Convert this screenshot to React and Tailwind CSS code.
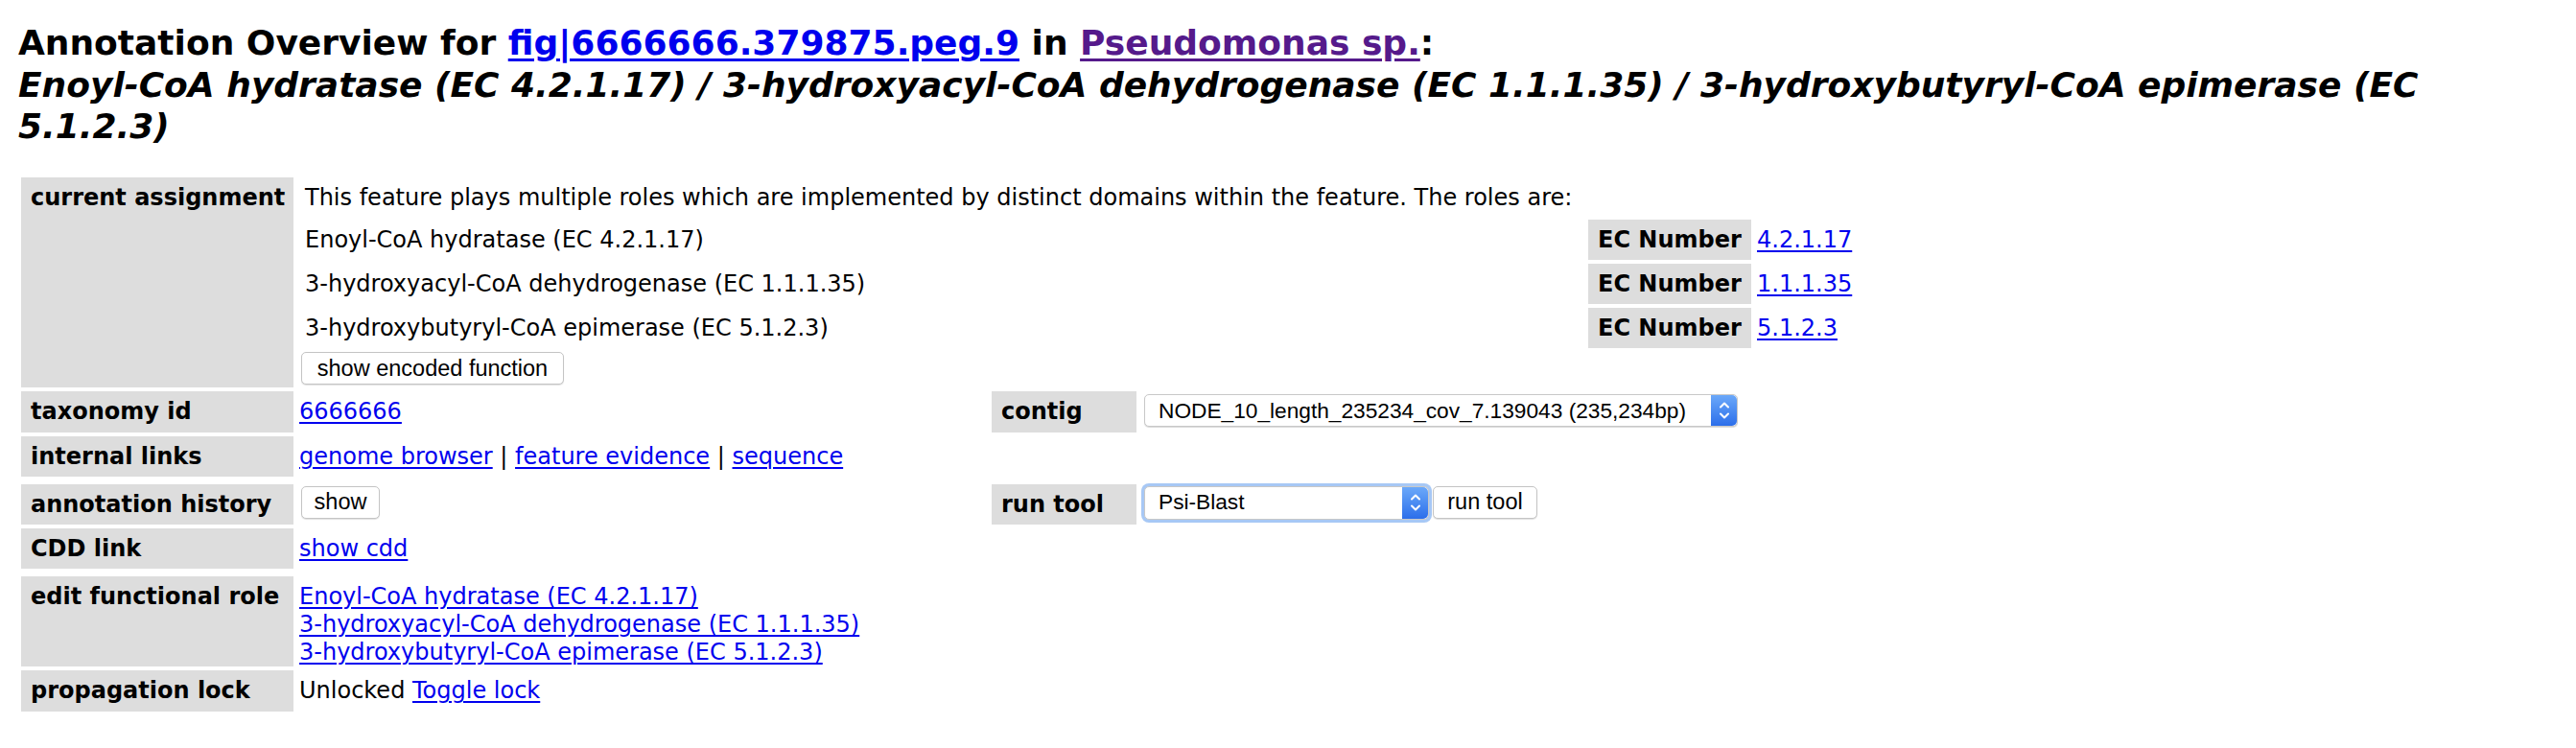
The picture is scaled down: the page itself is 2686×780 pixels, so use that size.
import React from "react";

const link = "text-[#0000ee] underline decoration-2 underline-offset-[3px]";
const rowGrid = "grid grid-cols-[284px_720px_151px_auto] gap-x-1";

function Label({ children }) {
    return (
        <div className="bg-[#dddddd] pl-[10px] pt-[7px] pb-[6px] font-bold whitespace-nowrap">
            {children}
        </div>
    );
}

function Button({ children, width }) {
    return (
        <div
            className={
                "h-[34px] flex items-center justify-center bg-white border border-[#c4c4c4] rounded-[5px] shadow-[0_1px_1px_rgba(0,0,0,0.12)] " +
                "font-['Liberation_Sans',Arial,sans-serif] text-[23.5px] text-black whitespace-nowrap " +
                width
            }
        >
            {children}
        </div>
    );
}

function Stepper() {
    return (
        <div className="h-full w-[27px] rounded-r-[5px] bg-gradient-to-b from-[#6ba8f9] to-[#2c6eea] flex items-center justify-center">
            <svg width="14" height="24" viewBox="0 0 14 24" fill="none" stroke="white" strokeWidth="2" strokeLinecap="round" strokeLinejoin="round">
                <path d="M3 8.5 L7 4.5 L11 8.5" />
                <path d="M3 15.5 L7 19.5 L11 15.5" />
            </svg>
        </div>
    );
}

function Select({ value, width, height, focused }) {
    return (
        <div
            className={
                "flex items-stretch bg-white border border-[#c8c8c8] rounded-[5px] shadow-[0_1px_1px_rgba(0,0,0,0.15)] " +
                "font-['Liberation_Sans',Arial,sans-serif] text-[22.7px] text-black whitespace-nowrap " +
                width + " " + height +
                (focused ? " ring-[3px] ring-[#a7c8f5]" : "")
            }
        >
            <div className="flex-1 flex items-center pl-[14px]">{value}</div>
            <Stepper />
        </div>
    );
}

function CurrentAssignment() {
    const roles = [
        ["Enoyl-CoA hydratase (EC 4.2.1.17)", "4.2.1.17"],
        ["3-hydroxyacyl-CoA dehydrogenase (EC 1.1.1.35)", "1.1.1.35"],
        ["3-hydroxybutyryl-CoA epimerase (EC 5.1.2.3)", "5.1.2.3"],
    ];

    return (
        <div className={rowGrid}>
            <Label>current assignment</Label>
            <div className="col-span-3 pl-1 pt-[7px] pb-[3px]">
                <div className="pl-1 whitespace-nowrap">
                    This feature plays multiple roles which are implemented by distinct domains within the feature. The roles are:
                </div>
                <div className="mt-2 grid grid-cols-[1338px_170px_auto] gap-1">
                    {roles.map(([role, ec]) => (
                        <React.Fragment key={ec}>
                            <div className="h-[42px] flex items-center pl-1 whitespace-nowrap">{role}</div>
                            <div className="h-[42px] flex items-center bg-[#dddddd] pl-[10px] font-bold whitespace-nowrap">
                                EC Number
                            </div>
                            <div className="h-[42px] flex items-center pl-[2px]">
                                <a className={link}>{ec}</a>
                            </div>
                        </React.Fragment>
                    ))}
                </div>
                <div className="mt-1">
                    <Button width="w-[274px]">show encoded function</Button>
                </div>
            </div>
        </div>
    );
}

export default function App() {
    return (
        <div className="min-h-screen bg-white text-black font-['DejaVu_Sans',Verdana,sans-serif] text-[24px] leading-[1.215] px-[19px] pt-[23px]">
            <h2 className="text-[36px] font-bold leading-[1.215]">
                Annotation Overview for <a className="text-[#0000ee] underline decoration-[3px] underline-offset-[4px]">fig|6666666.379875.peg.9</a> in{" "}
                <a className="text-[#551a8b] underline decoration-[3px] underline-offset-[4px]">Pseudomonas sp.</a>:
                <br />
                <i>
                    Enoyl-CoA hydratase (EC 4.2.1.17) / 3-hydroxyacyl-CoA dehydrogenase (EC 1.1.1.35) / 3-hydroxybutyryl-CoA epimerase (EC 5.1.2.3)
                </i>
            </h2>

            <div className="mt-[31px] ml-[3px] flex flex-col gap-1">
                <CurrentAssignment />

                <div className={rowGrid}>
                    <Label>taxonomy id</Label>
                    <div className="pl-[2px] pt-[7px]">
                        <a className={link}>6666666</a>
                    </div>
                    <Label>contig</Label>
                    <div className="pl-1 pt-[3px]">
                        <Select value="NODE_10_length_235234_cov_7.139043 (235,234bp)" width="w-[619px]" height="h-[34px]" />
                    </div>
                </div>

                <div className={rowGrid}>
                    <Label>internal links</Label>
                    <div className="pl-[2px] pt-[7px] whitespace-nowrap">
                        <a className={link}>genome browser</a> | <a className={link}>feature evidence</a> |{" "}
                        <a className={link}>sequence</a>
                    </div>
                </div>

                <div className={rowGrid + " mt-1"}>
                    <Label>annotation history</Label>
                    <div className="pl-1 pt-[2px]">
                        <Button width="w-[82px]">show</Button>
                    </div>
                    <Label>run tool</Label>
                    <div className="pl-1 pt-[2px] flex items-start gap-[4px]">
                        <Select value="Psi-Blast" width="w-[297px]" height="h-[35px]" focused />
                        <Button width="w-[109px]">run tool</Button>
                    </div>
                </div>

                <div className={rowGrid}>
                    <Label>CDD link</Label>
                    <div className="pl-[2px] pt-[7px]">
                        <a className={link}>show cdd</a>
                    </div>
                </div>

                <div className={rowGrid + " mt-1"}>
                    <Label>edit functional role</Label>
                    <div className="pl-[2px] pt-[7px] flex flex-col items-start whitespace-nowrap">
                        <a className={link}>Enoyl-CoA hydratase (EC 4.2.1.17)</a>
                        <a className={link}>3-hydroxyacyl-CoA dehydrogenase (EC 1.1.1.35)</a>
                        <a className={link}>3-hydroxybutyryl-CoA epimerase (EC 5.1.2.3)</a>
                    </div>
                </div>

                <div className={rowGrid}>
                    <Label>propagation lock</Label>
                    <div className="pl-[2px] pt-[7px] whitespace-nowrap">
                        Unlocked <a className={link}>Toggle lock</a>
                    </div>
                </div>
            </div>
        </div>
    );
}
